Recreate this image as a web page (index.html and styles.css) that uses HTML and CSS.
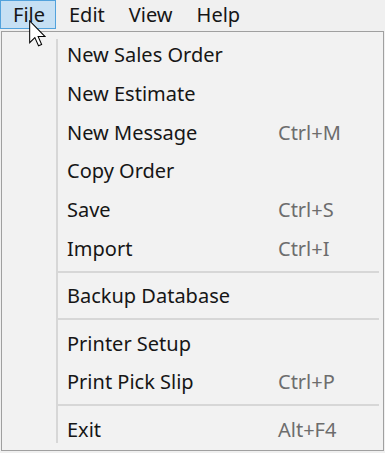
FILE: index.html
```html
<!DOCTYPE html>
<html lang="en">
<head>
    <meta charset="UTF-8" />
    <title>File Menu</title>
    <link rel="stylesheet" href="styles.css">
</head>
<body>
    <div class="window">
        <div class="menubar">
            <span class="menubar-item active">File</span>
            <span class="menubar-item">Edit</span>
            <span class="menubar-item">View</span>
            <span class="menubar-item">Help</span>
        </div>

        <div class="dropdown">
            <div class="menu-item"><span>New Sales Order</span></div>
            <div class="menu-item"><span>New Estimate</span></div>
            <div class="menu-item"><span>New Message</span><span class="shortcut">Ctrl+M</span></div>
            <div class="menu-item"><span>Copy Order</span></div>
            <div class="menu-item"><span>Save</span><span class="shortcut">Ctrl+S</span></div>
            <div class="menu-item"><span>Import</span><span class="shortcut">Ctrl+I</span></div>
            <div class="separator"></div>
            <div class="menu-item"><span>Backup Database</span></div>
            <div class="separator"></div>
            <div class="menu-item"><span>Printer Setup</span></div>
            <div class="menu-item"><span>Print Pick Slip</span><span class="shortcut">Ctrl+P</span></div>
            <div class="separator"></div>
            <div class="menu-item"><span>Exit</span><span class="shortcut">Alt+F4</span></div>
        </div>

        <!-- mouse pointer over the File menu -->
        <svg class="cursor" viewBox="0 0 12.5 19.5" width="17" height="27">
            <path d="M0.5 0.5 L0.5 16.5 L4.3 12.8 L7 18.8 L9.3 17.8 L6.7 12 L11.8 12 Z"
                  fill="#fff" stroke="#000" stroke-width="0.75" stroke-linejoin="miter" />
        </svg>
    </div>
</body>
</html>
```

FILE: styles.css
```css
body {
    margin: 0;
    background-color: #f0f0f0;
    font-family: "Segoe UI", "Noto Sans", "Open Sans", sans-serif;
    font-size: 20px;
    color: #161616;
}
.window {
    position: relative;
    width: 385px;
    height: 453px;
    overflow: hidden;
}
.menubar {
    display: flex;
    height: 31px;
}
.menubar-item {
    box-sizing: border-box;
    height: 29px;
    line-height: 27px;
    padding: 0 10px 0 12px;
    border: 1px solid transparent;
}
.menubar-item.active {
    background-color: #c6e0f4;
    border-color: #52a2dc;
}
.dropdown {
    box-sizing: border-box;
    width: 383px;
    height: 420px;
    margin-left: 1px;
    padding-top: 4px;
    border: 1px solid #a0a0a0;
    background: linear-gradient(#d7d7d7, #d7d7d7) no-repeat 54px 7px / 2px calc(100% - 14px), #f2f2f2;
}
.menu-item {
    display: grid;
    grid-template-columns: 211px auto;
    height: 38.8px;
    line-height: 38.8px;
    padding-left: 65px;
    white-space: nowrap;
}
.shortcut {
    color: #6d6d6d;
}
.separator {
    height: 2px;
    margin: 2px 4px 4.5px 56px;
    background-color: #d7d7d7;
}
.cursor {
    position: absolute;
    left: 29px;
    top: 20px;
}
```
